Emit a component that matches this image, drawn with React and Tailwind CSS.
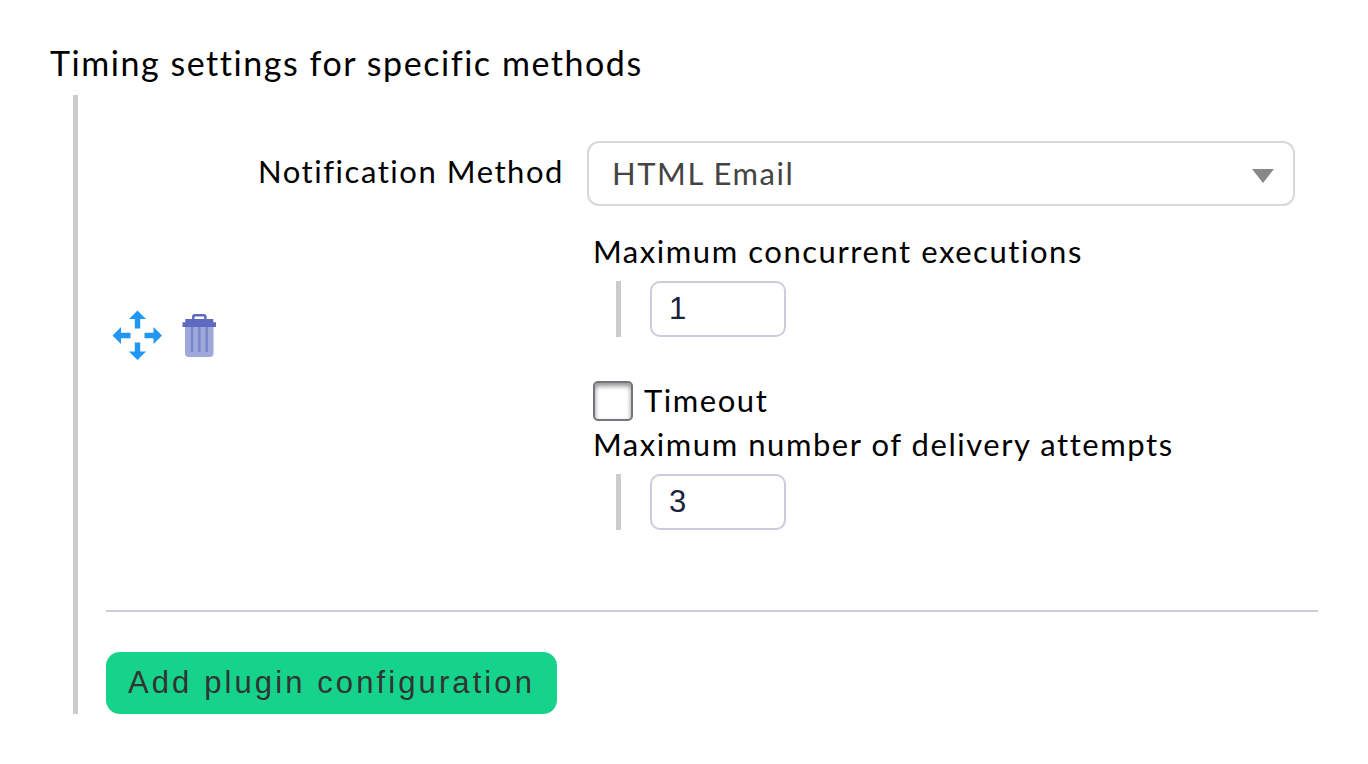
import { useState } from "react";

function MoveIcon() {
  return (
    <svg viewBox="-0.5 -0.5 50 50" className="size-[50px]" fill="#2196f3" aria-hidden="true">
      <path d="M25 0 L33.5 8.5 H27.7 V18 H22.3 V8.5 H16.5 Z" />
      <path d="M25 49.5 L33.5 41 H27.7 V32 H22.3 V41 H16.5 Z" />
      <path d="M0 25 L8.5 16.500 V22.300 H18 V27.700 H8.500 V33.500 Z" />
      <path d="M49.5 25 L41 16.500 V22.300 H32 V27.700 H41 V33.500 Z" />
    </svg>
  );
}

function TrashIcon() {
  return (
    <svg viewBox="-0.5 -1 34 44" className="h-[44px] w-[34px]" aria-hidden="true">
      <path d="M2.500 12 H31 V39 Q31 43 27 43 H6.500 Q2.500 43 2.500 39 Z" fill="#9fa8da" />
      <path d="M9.500 13 V38 M16.800 13 V38 M24.200 13 V38" stroke="#7986cb" strokeWidth="2.400" />
      <path d="M10.800 6 V2.800 Q10.800 1.300 12.300 1.300 H21.300 Q22.800 1.300 22.800 2.800 V6" fill="none" stroke="#5c6bc0" strokeWidth="2.500" />
      <path d="M2.800 5 H30.800 V8.300 H33.500 V13 H0 V8.300 H2.800 Z" fill="#5c6bc0" />
    </svg>
  );
}

function NumberField({ id, label, initial }) {
  const [value, setValue] = useState(initial);
  return (
    <div>
      <label htmlFor={id} className="block pl-[6px] leading-[42px]">
        {label}
      </label>
      <div className="mt-[9px] ml-[29px] flex border-l-5 border-[#cccccc] pl-[29px]">
        <input
          id={id}
          type="text"
          inputMode="numeric"
          value={value}
          onChange={(e) => setValue(e.target.value)}
          className="h-[56px] w-[136px] rounded-[10px] border-2 border-[#ccccdd] bg-white pr-4 pl-[17px] font-['Liberation_Sans',sans-serif] text-[31px] text-[#1c2340]"
        />
      </div>
    </div>
  );
}

export default function App() {
  return (
    <main className="bg-white px-[50px] pt-[40px] pb-[50px] font-['Lato',sans-serif] text-[31px] tracking-wider text-black">
      <h1 className="text-[34px] leading-[46px]">Timing settings for specific methods</h1>
      <section className="mt-[9px] ml-[23px] border-l-5 border-[#cccccc] pl-[28px]">
        <div className="flex gap-[23px] border-b-2 border-[#ccccdd] pt-[46px] pr-[23px] pb-[80px]">
          <div className="flex w-[458px] shrink-0 justify-between">
            <div className="flex items-center gap-[20px] pb-[2px] pl-[6px]">
              <button type="button" aria-label="Move entry" className="cursor-move">
                <MoveIcon />
              </button>
              <button type="button" aria-label="Delete entry" className="cursor-pointer">
                <TrashIcon />
              </button>
            </div>
            <label htmlFor="method" className="leading-[60px]">
              Notification Method
            </label>
          </div>
          <div className="min-w-0 flex-1">
            <div className="relative">
              <select
                id="method"
                className="block h-[65px] w-full appearance-none rounded-[12px] border-2 border-[#d8d8d8] bg-white pr-16 pl-[23px] tracking-wider text-[#444444]"
              >
                <option>HTML Email</option>
              </select>
              <svg
                viewBox="0 0 22 14"
                className="pointer-events-none absolute top-[28px] right-[21px] h-[14px] w-[22px]"
                fill="#888888"
                aria-hidden="true"
              >
                <path d="M0 0 H22 L11 14 Z" />
              </svg>
            </div>
            <div className="mt-[24px]">
              <NumberField id="executions" label="Maximum concurrent executions" initial="1" />
            </div>
            <div className="mt-[42px] flex h-[44px] gap-[11px] pl-[6px] leading-[42px]">
              <input
                id="timeout"
                type="checkbox"
                className="size-[40px] appearance-none self-center rounded-[5px] border-2 border-[#73757a] bg-white shadow-[inset_0_3px_5px_rgba(0,0,0,0.45)] checked:bg-[#15d38a]"
              />
              <label htmlFor="timeout">Timeout</label>
            </div>
            <NumberField id="attempts" label="Maximum number of delivery attempts" initial="3" />
          </div>
        </div>
        <button
          type="button"
          className="mt-[40px] block h-[62px] cursor-pointer rounded-[14px] bg-[#15d38a] px-[22px] font-['Liberation_Sans',sans-serif] tracking-widest text-[#333333]"
        >
          Add plugin configuration
        </button>
      </section>
    </main>
  );
}
